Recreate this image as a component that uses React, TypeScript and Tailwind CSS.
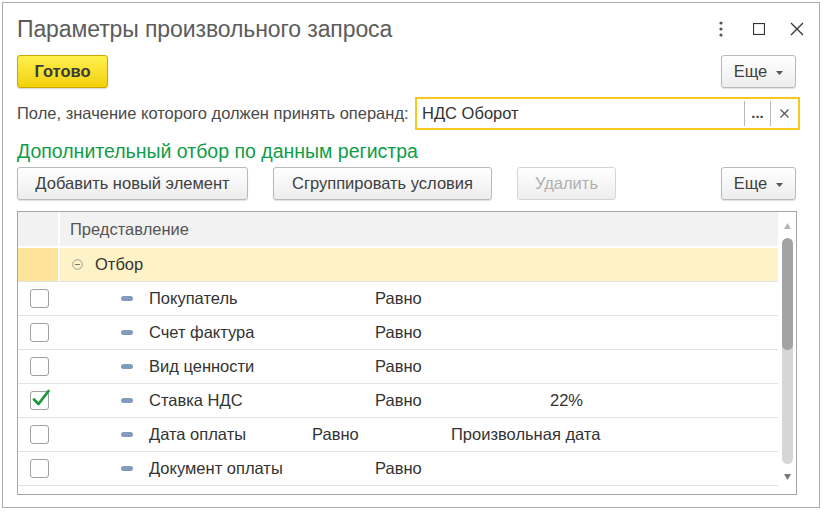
import React from 'react'

type Row = {
  name: string
  checked?: boolean
  nameW: string
  opW: string
  value?: string
}

const rows: Row[] = [
  { name: 'Покупатель', nameW: 'w-[226px]', opW: 'w-[175px]' },
  { name: 'Счет фактура', nameW: 'w-[226px]', opW: 'w-[175px]' },
  { name: 'Вид ценности', nameW: 'w-[226px]', opW: 'w-[175px]' },
  { name: 'Ставка НДС', checked: true, nameW: 'w-[226px]', opW: 'w-[175px]', value: '22%' },
  { name: 'Дата оплаты', nameW: 'w-[163px]', opW: 'w-[139px]', value: 'Произвольная дата' },
  { name: 'Документ оплаты', nameW: 'w-[226px]', opW: 'w-[175px]' },
]

function MoreButton() {
  return (
    <button className="h-[33px] w-[75px] flex items-center justify-center gap-[9px] rounded-[3px] border border-[#b9b9b9] bg-gradient-to-b from-white to-[#ededed] shadow-[0_1px_1px_rgba(0,0,0,0.12)] text-[16.5px] text-[#404040]">
      <span>Еще</span>
      <svg width="7" height="4" viewBox="0 0 7 4" className="mt-[2px]">
        <path d="M0 0h7L3.5 4z" fill="#555" />
      </svg>
    </button>
  )
}

function Btn({ children, w, disabled }: { children: React.ReactNode; w: string; disabled?: boolean }) {
  return (
    <button
      className={`${w} h-[33px] flex items-center justify-center rounded-[3px] border bg-gradient-to-b from-white to-[#ededed] text-[16.5px] ${
        disabled
          ? 'border-[#d4d4d4] text-[#b0b0b0]'
          : 'border-[#b9b9b9] text-[#404040] shadow-[0_1px_1px_rgba(0,0,0,0.12)]'
      }`}
    >
      {children}
    </button>
  )
}

function Checkbox({ checked }: { checked?: boolean }) {
  return (
    <div className="w-[19px] h-[19px] rounded-[3px] border border-[#a0a0a0] bg-white relative">
      {checked && (
        <svg width="20" height="20" viewBox="0 0 20 20" className="absolute left-[0px] top-[-4px]">
          <path d="M3 11.5l4.5 4.5L17.5 3" stroke="#1a9a3c" strokeWidth="2.8" fill="none" strokeLinecap="round" strokeLinejoin="round" />
        </svg>
      )}
    </div>
  )
}

export default function App() {
  return (
    <div className="w-[823px] h-[512px] bg-white overflow-hidden font-['Liberation_Sans',Arial,sans-serif]">
      <div className="ml-[2px] mt-[2px] w-[818px] h-[506px] border border-[#acacac] bg-white flex flex-col px-[14px]">
        {/* title */}
        <div className="h-[52px] shrink-0 flex items-center">
          <div className="flex-1 text-[23px] text-[#5c5c5c] tracking-[-0.1px] pt-[1px] whitespace-nowrap">Параметры произвольного запроса</div>
          <div className="flex items-center mr-[-2px]">
            <svg width="6" height="16" viewBox="0 0 6 16" className="mr-[29px]">
              <circle cx="3" cy="2" r="1.6" fill="#555" />
              <circle cx="3" cy="8" r="1.6" fill="#555" />
              <circle cx="3" cy="14" r="1.6" fill="#555" />
            </svg>
            <svg width="12" height="12" viewBox="0 0 12 12" className="mr-[25px]">
              <rect x="0.5" y="0.5" width="11" height="11" fill="none" stroke="#333" strokeWidth="1.2" />
            </svg>
            <svg width="14" height="14" viewBox="0 0 14 14" className="mr-[3px]">
              <path d="M1 1l12 12M13 1L1 13" stroke="#333" strokeWidth="1.3" />
            </svg>
          </div>
        </div>

        {/* top buttons */}
        <div className="h-[33px] shrink-0 flex items-center justify-between pr-[9px]">
          <button className="h-[33px] w-[91px] rounded-[3px] border border-[#c9a700] bg-gradient-to-b from-[#fff04a] to-[#f3d000] shadow-[0_1px_1px_rgba(0,0,0,0.15)] text-[16.5px] font-bold text-[#3a3a3a]">
            Готово
          </button>
          <MoreButton />
        </div>

        {/* operand field */}
        <div className="mt-[9px] h-[33px] shrink-0 flex items-center">
          <div className="text-[16.5px] text-[#4a4a4a] w-[398px] whitespace-nowrap">Поле, значение которого должен принять операнд:</div>
          <div className="h-[33px] w-[385px] border-2 border-[#f7c81e] flex items-center">
            <div className="flex-1 pl-[5px] text-[16.5px] text-[#333]">НДС Оборот</div>
            <div className="h-[25px] w-px bg-[#b8b8b8]" />
            <div className="w-[25px] text-center text-[15px] font-bold text-[#444] leading-none pb-[3px]">...</div>
            <div className="h-[25px] w-px bg-[#b8b8b8]" />
            <div className="w-[27px] flex justify-center">
              <svg width="9" height="9" viewBox="0 0 9 9">
                <path d="M0.5 0.5l8 8M8.5 0.5l-8 8" stroke="#555" strokeWidth="1.2" />
              </svg>
            </div>
          </div>
        </div>

        {/* section header */}
        <div className="mt-[11px] h-[22px] shrink-0 flex items-center text-[19.5px] text-[#0f9d49] whitespace-nowrap">Дополнительный отбор по данным регистра</div>

        {/* action buttons */}
        <div className="mt-[4px] h-[33px] shrink-0 flex items-center pr-[9px]">
          <Btn w="w-[231px]">Добавить новый элемент</Btn>
          <div className="w-[25px]" />
          <Btn w="w-[219px]">Сгруппировать условия</Btn>
          <div className="w-[25px]" />
          <Btn w="w-[99px]" disabled>
            Удалить
          </Btn>
          <div className="flex-1" />
          <MoreButton />
        </div>

        {/* table */}
        <div className="mt-[11px] h-[284px] shrink-0 w-[780px] border border-[#a6a6a6] flex overflow-hidden">
          <div className="flex-1 flex flex-col">
            <div className="h-[36px] shrink-0 flex bg-[#f2f2f2] border-b-2 border-white">
              <div className="w-[42px] border-r-2 border-white" />
              <div className="flex-1 flex items-center pl-[10px] text-[16.5px] text-[#555]">Представление</div>
            </div>
            <div className="h-[34px] shrink-0 flex border-b border-[#e3e3e3] bg-[#fef3c7]">
              <div className="w-[42px] bg-[#fde49a] border-r-2 border-white" />
              <div className="flex-1 flex items-center pl-[12px]">
                <svg width="11" height="11" viewBox="0 0 11 11" className="mr-[12px]">
                  <circle cx="5.5" cy="5.5" r="4.8" fill="none" stroke="#9a9a9a" strokeWidth="1" />
                  <path d="M3 5.5h5" stroke="#777" strokeWidth="1" />
                </svg>
                <span className="text-[16.5px] text-[#333]">Отбор</span>
              </div>
            </div>
            {rows.map((r) => (
              <div key={r.name} className="h-[34px] shrink-0 flex items-center border-b border-[#e3e3e3] text-[16.5px] text-[#333]">
                <div className="w-[42px] flex justify-center">
                  <Checkbox checked={r.checked} />
                </div>
                <div className="w-[61px]" />
                <div className="w-[12px] h-[5px] rounded-full bg-[#7f9db8]" />
                <div className="w-[16px]" />
                <div className={`${r.nameW} whitespace-nowrap`}>{r.name}</div>
                <div className={`${r.opW} whitespace-nowrap`}>Равно</div>
                <div className="whitespace-nowrap">{r.value}</div>
              </div>
            ))}
            <div className="h-[34px] shrink-0 flex items-center">
              <div className="w-[42px] flex justify-center">
                <Checkbox />
              </div>
            </div>
          </div>
          {/* scrollbar */}
          <div className="w-[18px] shrink-0 flex flex-col items-center">
            <svg width="7" height="6" viewBox="0 0 7 6" className="mt-[11px]">
              <path d="M3.5 0L7 6H0z" fill="#b5b5b5" />
            </svg>
            <div className="mt-[9px] w-[11px] h-[226px] rounded-full bg-[#d6d6d6] overflow-hidden">
              <div className="h-[112px] w-full rounded-full bg-[#a3a3a3]" />
            </div>
            <svg width="7" height="6" viewBox="0 0 7 6" className="mt-[10px]">
              <path d="M0 0h7L3.5 6z" fill="#777" />
            </svg>
          </div>
        </div>
      </div>
    </div>
  )
}
